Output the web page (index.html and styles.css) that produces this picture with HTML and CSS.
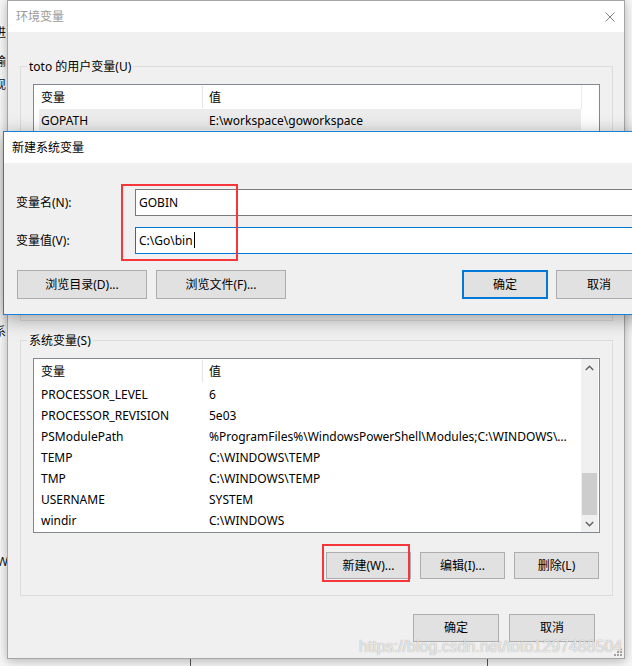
FILE: index.html
```html
<!DOCTYPE html>
<html lang="zh-CN">
<head>
<meta charset="utf-8">
<title>环境变量</title>
<link rel="stylesheet" href="styles.css">
</head>
<body>
<div class="bgwin">
  <span class="frag f1">进</span>
  <span class="frag f2">输</span>
  <span class="frag f3">现</span>
  <span class="frag f4">系</span>
  <span class="frag f5">Wi</span>
  <span class="bg-vline v1"></span>
  <span class="bg-vline v2"></span>
</div>

<div class="env">
  <div class="env-title">
    <span>环境变量</span>
    <svg class="close" width="10" height="10" viewBox="0 0 10 10"><path d="M0.5 0.5L9.5 9.5M9.5 0.5L0.5 9.5" stroke="#808080" stroke-width="1" fill="none"/></svg>
  </div>
  <div class="env-body">
    <fieldset class="group">
      <legend>toto 的用户变量(U)</legend>
      <div class="group-user-inner">
        <div class="lv lv-user">
          <div class="lv-main">
            <div class="lv-head"><div class="c1">变量</div><div class="c2">值</div></div>
            <div class="lv-row sel"><div class="c1">GOPATH</div><div class="c2">E:\workspace\goworkspace</div></div>
          </div>
          <div class="lv-blank"><div class="lv-blank-head"></div></div>
        </div>
      </div>
    </fieldset>

    <fieldset class="group group-sys">
      <legend>系统变量(S)</legend>
      <div class="lv lv-sys">
        <div class="lv-main">
          <div class="lv-head"><div class="c1">变量</div><div class="c2">值</div></div>
          <div class="lv-row"><div class="c1">PROCESSOR_LEVEL</div><div class="c2">6</div></div>
          <div class="lv-row"><div class="c1">PROCESSOR_REVISION</div><div class="c2">5e03</div></div>
          <div class="lv-row"><div class="c1">PSModulePath</div><div class="c2">%ProgramFiles%\WindowsPowerShell\Modules;C:\WINDOWS\system32\WindowsPowerShell\v1.0\Modules</div></div>
          <div class="lv-row"><div class="c1">TEMP</div><div class="c2">C:\WINDOWS\TEMP</div></div>
          <div class="lv-row"><div class="c1">TMP</div><div class="c2">C:\WINDOWS\TEMP</div></div>
          <div class="lv-row"><div class="c1">USERNAME</div><div class="c2">SYSTEM</div></div>
          <div class="lv-row"><div class="c1">windir</div><div class="c2">C:\WINDOWS</div></div>
        </div>
        <div class="sb">
          <div class="sb-btn"><svg width="9" height="6" viewBox="0 0 9 6"><path d="M0.8 5L4.5 1.3L8.2 5" stroke="#606060" stroke-width="1.4" fill="none"/></svg></div>
          <div class="sb-track"><div class="sb-thumb"></div></div>
          <div class="sb-btn"><svg width="9" height="6" viewBox="0 0 9 6"><path d="M0.8 1L4.5 4.7L8.2 1" stroke="#606060" stroke-width="1.4" fill="none"/></svg></div>
        </div>
      </div>
      <div class="btnrow">
        <button class="btn btn-sm">新建(W)...</button>
        <button class="btn btn-sm">编辑(I)...</button>
        <button class="btn btn-sm">删除(L)</button>
      </div>
    </fieldset>

    <div class="footer">
      <button class="btn btn-ft">确定</button>
      <button class="btn btn-ft">取消</button>
    </div>
  </div>
  <svg class="grip" width="8" height="8" viewBox="0 0 8 8"><g fill="#a0a0a0"><rect x="6" y="0" width="2" height="2"/><rect x="3" y="3" width="2" height="2"/><rect x="6" y="3" width="2" height="2"/><rect x="0" y="6" width="2" height="2"/><rect x="3" y="6" width="2" height="2"/><rect x="6" y="6" width="2" height="2"/></g></svg>
</div>

<div class="nv">
  <div class="nv-title">新建系统变量</div>
  <div class="nv-body">
    <div class="field">
      <label class="field-label">变量名(N):</label>
      <div class="input">GOBIN</div>
    </div>
    <div class="field field-2">
      <label class="field-label">变量值(V):</label>
      <div class="input focus">C:\Go\bin<span class="caret"></span></div>
    </div>
    <div class="nv-btns">
      <button class="btn btn-wide">浏览目录(D)...</button>
      <button class="btn btn-wide">浏览文件(F)...</button>
      <button class="btn btn-nv default">确定</button>
      <button class="btn btn-nv">取消</button>
    </div>
  </div>
</div>

<div class="hl hl1"></div>
<div class="hl hl2"></div>

<div class="watermark">https://blog.csdn.net/toto1297488504</div>
</body>
</html>
```

FILE: styles.css
```css
* { box-sizing: border-box; }
html, body { margin: 0; padding: 0; }
body {
  width: 632px;
  height: 666px;
  overflow: hidden;
  position: relative;
  background: #ffffff;
  font-family: "Noto Sans", "Noto Sans CJK SC", sans-serif;
  font-size: 12px;
  line-height: 16px;
  color: #000;
}

/* background window */
.bgwin { position: absolute; left: 0; top: 0; width: 632px; height: 666px; background: #f7f7f7; }
.frag { position: absolute; left: -6px; font-size: 12px; line-height: 16px; color: #111; }
.f1 { top: 25px; }
.f2 { top: 54px; }
.f3 { top: 77px; }
.f4 { top: 324px; }
.f5 { top: 554px; left: -3px; }
.bg-vline { position: absolute; top: 659px; width: 1px; height: 8px; background: #555; }
.v1 { left: 190px; }
.v2 { left: 487px; }

/* main dialog */
.env {
  position: absolute;
  left: 7px;
  top: 0;
  width: 618px;
  height: 659px;
  border: 1px solid #a6a6a6;
  background: #f0f0f0;
  box-shadow: 0 2px 10px rgba(0,0,0,0.28);
  display: flex;
  flex-direction: column;
}
.env-title {
  height: 31px;
  flex: none;
  background: #fff;
  display: flex;
  align-items: center;
  justify-content: space-between;
  padding: 0 9px 0 8px;
  color: #9a9a9a;
}
.close { display: block; }
.env-body {
  flex: 1;
  padding: 26px 11px 0 12px;
  display: flex;
  flex-direction: column;
}

.group {
  margin: 0;
  border: 1px solid #dcdcdc;
  padding: 10px 12px 0 12px;
  min-width: 0;
}
.group legend {
  padding: 0 2px;
  margin-left: -6px;
  line-height: 18px;
  height: 16px;
}
.group-user-inner { height: 236px; }
.group-sys { margin-top: 11px; padding-bottom: 16px; }

/* list view */
.lv {
  display: flex;
  border: 1px solid #828790;
  background: #fff;
}
.lv-sys { height: 175px; }
.lv-user { height: 200px; }
.lv-main { flex: 1; min-width: 0; overflow: hidden; }
.lv-head { display: flex; height: 24px; padding-top: 1px; }
.lv-head .c1 { border-right: 1px solid #e5e5e5; height: 22px; padding-top: 1px; line-height: 22px; }
.lv-head .c2 { padding-top: 1px; line-height: 22px; }
.lv-row { display: flex; height: 21px; padding-top: 2px; line-height: 19px; white-space: nowrap; }
.lv-row.sel { background: linear-gradient(to right, #fff 5px, #ececec 5px); }
.c1 { width: 169px; flex: none; padding-left: 7px; overflow: hidden; }
.c2 { flex: 1; min-width: 0; padding-left: 6px; padding-right: 9px; overflow: hidden; text-overflow: ellipsis; }
.lv-row .c1 { border-right: 1px solid transparent; }

.lv-blank { width: 18px; flex: none; }
.lv-blank-head { height: 24px; border-left: 1px solid #ececec; }

.sb { width: 17px; flex: none; display: flex; flex-direction: column; background: #f0f0f0; margin-right: 1px; }
.sb-btn { height: 17px; flex: none; display: flex; align-items: center; justify-content: center; }
.sb-btn svg { display: block; }
.sb-track { flex: 1; display: flex; flex-direction: column; justify-content: flex-end; padding: 0 1px; }
.sb-thumb { height: 42px; background: #cdcdcd; }

/* buttons */
.btn {
  font: inherit;
  font-size: 12px;
  color: #000;
  background: #e1e1e1;
  border: 1px solid #adadad;
  padding: 0;
  margin: 0;
  display: flex;
  align-items: center;
  justify-content: center;
}
.btnrow {
  display: flex;
  justify-content: flex-end;
  gap: 9px;
  margin-top: 19px;
  padding-right: 1px;
}
.btn-sm { width: 85px; height: 27px; }
.footer {
  display: flex;
  justify-content: flex-end;
  gap: 10px;
  margin-top: 18px;
  padding-right: 18px;
}
.btn-ft { width: 86px; height: 28px; }

/* new variable dialog */
.nv {
  position: absolute;
  left: 3px;
  top: 131px;
  width: 700px;
  height: 184px;
  border: 1px solid #1a7fd6;
  background: #f0f0f0;
  box-shadow: 0 4px 18px rgba(0,0,0,0.35);
  display: flex;
  flex-direction: column;
}
.nv-title {
  height: 31px;
  flex: none;
  background: #fff;
  line-height: 31px;
  padding-left: 8px;
}
.nv-body { flex: 1; padding: 26px 0 0 12px; display: flex; flex-direction: column; }
.field { display: flex; align-items: center; height: 27px; }
.field-2 { margin-top: 11px; }
.field-label { width: 119px; flex: none; }
.input {
  width: 560px;
  height: 27px;
  border: 1px solid #7a7a7a;
  background: #fff;
  padding-left: 3px;
  line-height: 25px;
  white-space: nowrap;
}
.input.focus { border-color: #0078d7; }
.caret { display: inline-block; width: 1px; height: 16px; background: #000; vertical-align: -3px; margin-left: 1px; }
.nv-btns { display: flex; margin-top: 16px; padding-left: 1px; }
.btn-wide { width: 130px; height: 29px; }
.btn-wide + .btn-wide { margin-left: 9px; }
.btn-nv { width: 86px; height: 29px; margin-left: 8px; }
.btn-nv.default { margin-left: 176px; border: 2px solid #0078d7; }

/* red highlight annotations */
.hl { position: absolute; border: 2px solid #f5373b; }
.hl1 { left: 121px; top: 184px; width: 117px; height: 77px; }
.hl2 { left: 322px; top: 544px; width: 88px; height: 38px; }

.grip { position: absolute; right: 2px; bottom: 2px; }

.watermark {
  position: absolute;
  left: 359px;
  top: 638px;
  font-family: "Liberation Sans", Arial, sans-serif;
  font-size: 16px;
  line-height: 18px;
  color: rgba(255,255,255,0.8);
  text-shadow: 0 0 1px rgba(0,0,0,0.45);
  white-space: nowrap;
}
```
